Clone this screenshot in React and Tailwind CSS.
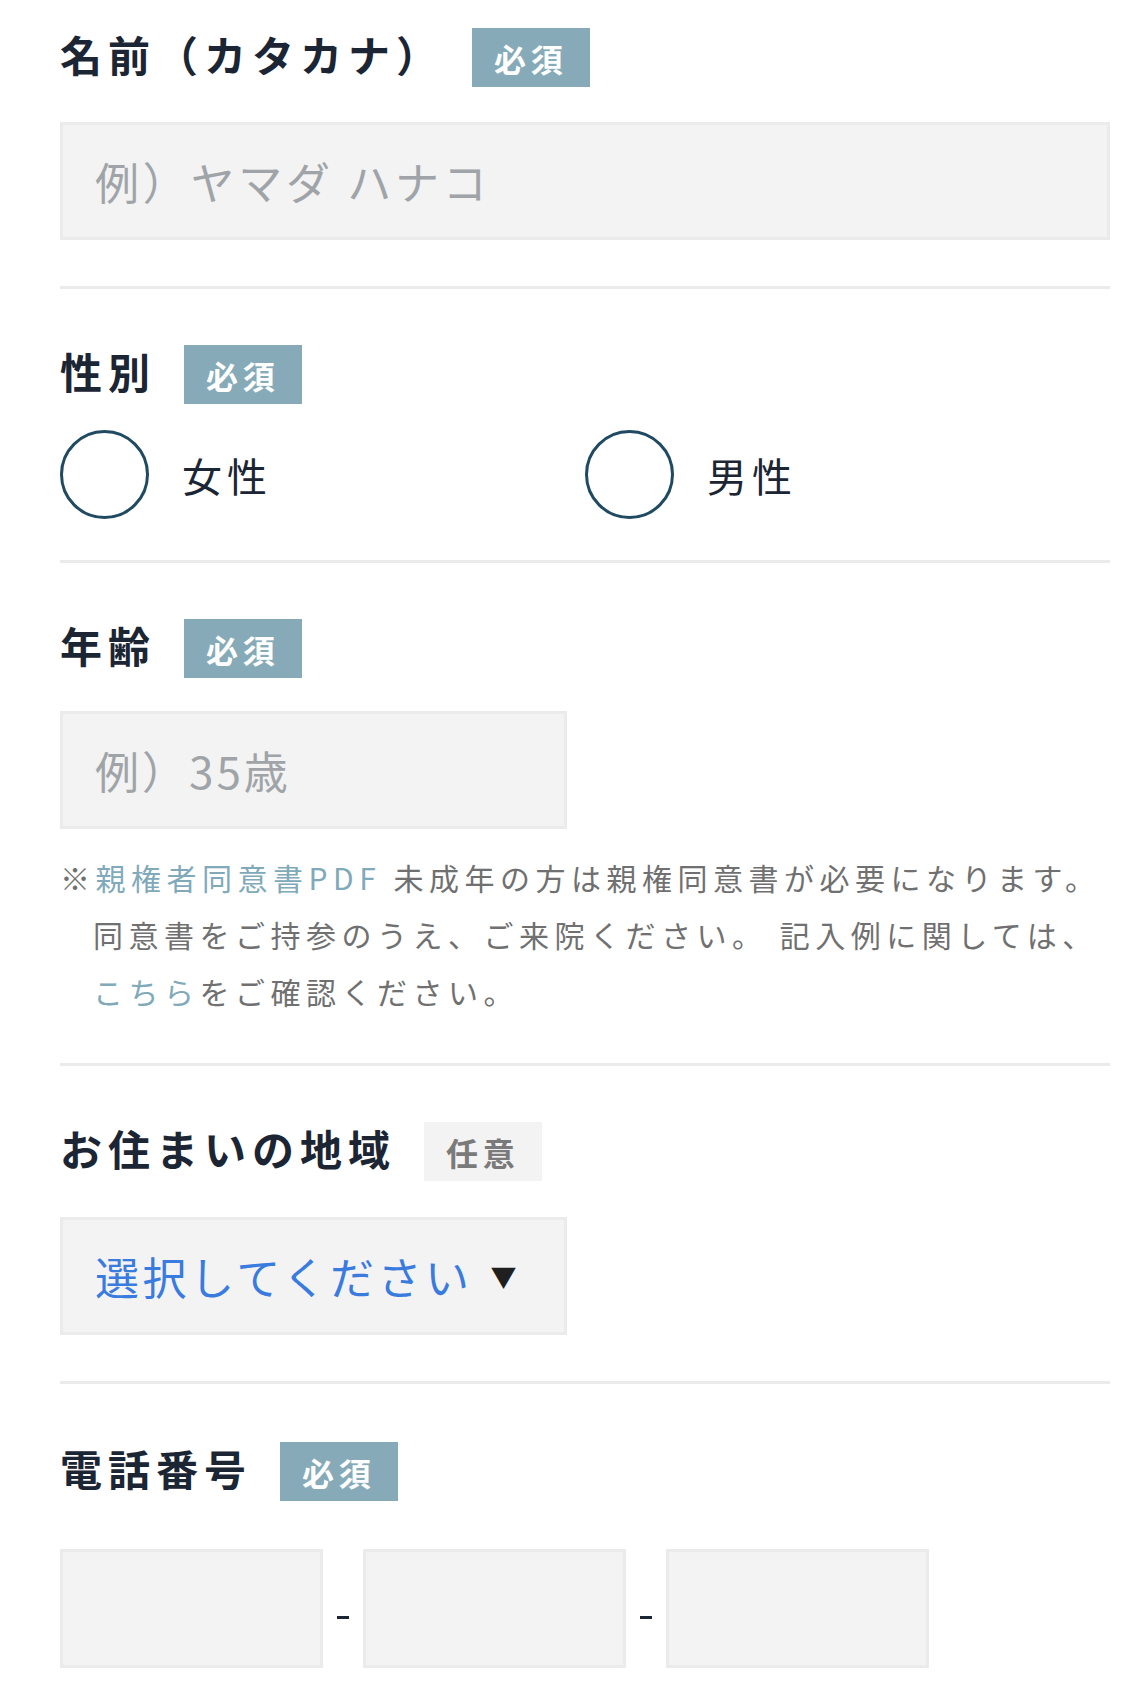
const FONT = "font-['Noto_Sans_CJK_JP','Noto_Sans',sans-serif]";

function Badge({ optional }) {
  if (optional) {
    return (
      <span className="ml-[28px] flex h-[59px] items-center bg-[#f3f3f3] px-[22px] text-[32px] font-bold tracking-[0.15em] text-[#7a7a7a]">
        任意
      </span>
    );
  }
  return (
    <span className="ml-[28px] flex h-[59px] items-center bg-[#86aab8] px-[22px] text-[32px] font-bold tracking-[0.15em] text-white">
      必須
    </span>
  );
}

function Label({ children, optional }) {
  return (
    <div className="flex h-[59px] items-center">
      <h2 className="mb-[8px] text-[42px] font-bold leading-none tracking-[6px] text-[#1b2533]">
        {children}
      </h2>
      <Badge optional={optional} />
    </div>
  );
}

function Divider() {
  return <div className="h-[3px] bg-[#ebebeb]" />;
}

const boxClass =
  "border-[3px] border-[#ebebeb] bg-[#f3f3f3] outline-none";

function Radio({ label }) {
  return (
    <label className="flex items-center">
      <span className="h-[89px] w-[89px] rounded-full border-[3px] border-[#1f4a62]" />
      <span className="ml-[33px] text-[40px] leading-none tracking-[5px] text-[#1b2533]">
        {label}
      </span>
    </label>
  );
}

function Dash() {
  return (
    <span className="flex w-[40px] justify-center pt-[18px]">
      <span className="h-[3px] w-[12px] bg-[#1b2533]" />
    </span>
  );
}

export default function App() {
  return (
    <div className={`${FONT} w-[1130px] bg-white pl-[60px] pr-[20px]`}>
      <section className="pt-[28px] pb-[46px]">
        <Label>名前（カタカナ）</Label>
        <input
          className={`${boxClass} mt-[35px] block h-[118px] w-full pl-[32px] text-[44px] tracking-[0.085em] placeholder:text-[#a0a4a8]`}
          placeholder="例）ヤマダ ハナコ"
        />
      </section>
      <Divider />

      <section className="pt-[56px] pb-[41px]">
        <Label>性別</Label>
        <div className="mt-[26px] grid grid-cols-2">
          <Radio label="女性" />
          <Radio label="男性" />
        </div>
      </section>
      <Divider />

      <section className="pt-[56px] pb-[43px]">
        <Label>年齢</Label>
        <input
          className={`${boxClass} mt-[33px] block h-[118px] w-[507px] pl-[32px] text-[44px] tracking-[3px] placeholder:text-[#a0a4a8]`}
          placeholder="例）35歳"
        />
        <p className="mt-[20px] pl-[33px] -indent-[33px] text-[30px] leading-[57px] tracking-[5.5px] text-[#707070]">
          ※<a className="text-[#80a9ba]">親権者同意書PDF</a> 未成年の方は親権同意書が必要になります。
          <br />
          同意書をご持参のうえ、ご来院ください。 記入例に関しては、
          <br />
          <a className="text-[#80a9ba]">こちら</a>をご確認ください。
        </p>
      </section>
      <Divider />

      <section className="pt-[56px] pb-[46px]">
        <Label optional>お住まいの地域</Label>
        <div
          className={`${boxClass} mt-[36px] flex h-[118px] w-[507px] items-center pl-[32px]`}
        >
          <span className="text-[44px] leading-none tracking-[0.08em] text-[#3a7be0]">
            選択してください
          </span>
          <span className="ml-[18px] text-[26px] leading-none text-[#1f1f1f]">▼</span>
        </div>
      </section>
      <Divider />

      <section className="pt-[58px] pb-[21px]">
        <Label>電話番号</Label>
        <div className="mt-[48px] flex items-center">
          <input className={`${boxClass} block h-[119px] w-[263px]`} />
          <Dash />
          <input className={`${boxClass} block h-[119px] w-[263px]`} />
          <Dash />
          <input className={`${boxClass} block h-[119px] w-[263px]`} />
        </div>
      </section>
    </div>
  );
}
